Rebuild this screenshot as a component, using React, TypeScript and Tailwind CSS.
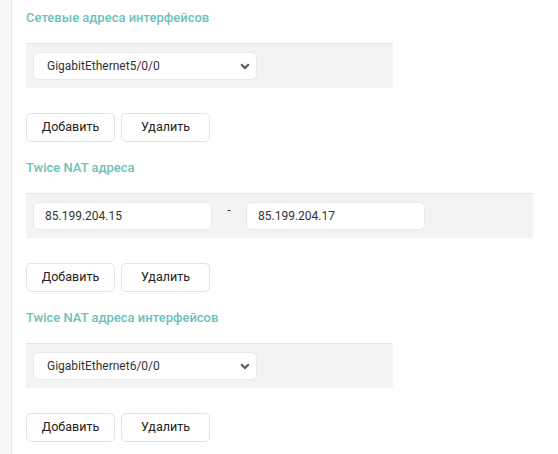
import React from 'react';

const font = { fontFamily: 'Roboto, "Noto Sans", sans-serif' };

const Chevron = () => (
  <svg width="10" height="7" viewBox="0 0 10 7" className="pointer-events-none absolute right-[7px] top-[11px]">
    <path d="M1.2 1.3L5 5 8.8 1.3" fill="none" stroke="#555" strokeWidth="2" />
  </svg>
);

const Select: React.FC<{ value: string }> = ({ value }) => (
  <div className="relative w-[224px]">
    <select
      defaultValue={value}
      className="h-[28px] w-full appearance-none rounded-[5px] border border-[#e8e8e8] bg-white pl-[13px] text-[12px] text-[#333] outline-none"
    >
      <option>{value}</option>
    </select>
    <Chevron />
  </div>
);

const Input: React.FC<{ value: string }> = ({ value }) => (
  <input
    defaultValue={value}
    className="h-[28px] w-[179px] rounded-[5px] border border-[#e8e8e8] bg-white pl-[11px] text-[12px] text-[#333] outline-none"
  />
);

const Buttons = () => (
  <div className="mt-[25px] flex gap-[6px]">
    <button className="h-[29px] w-[89px] rounded-[5px] border border-[#e3e3e3] bg-white text-[12.5px] text-[#222]">
      Добавить
    </button>
    <button className="h-[29px] w-[89px] rounded-[5px] border border-[#e3e3e3] bg-white text-[12.5px] text-[#222]">
      Удалить
    </button>
  </div>
);

const Section: React.FC<{ title: string; wide?: boolean; children: React.ReactNode }> = ({ title, wide, children }) => (
  <section className="h-[150px]">
    <h3 className="h-[43px] pt-[9px] text-[13px] font-medium leading-[18px] text-[#6cc2b9]">{title}</h3>
    <div
      className={`flex h-[45px] items-center border-t border-[#e6e6e6] bg-[#f3f3f3] pl-[7px] ${wide ? 'w-[507px]' : 'w-[367px]'}`}
    >
      {children}
    </div>
    <Buttons />
  </section>
);

export default function App() {
  return (
    <div className="flex min-h-[454px] bg-white" style={font}>
      <div className="w-[12px] shrink-0 border-r border-[#ebebeb] bg-[#f7f8fa]" />
      <div className="pl-[14px]">
        <Section title="Сетевые адреса интерфейсов">
          <Select value="GigabitEthernet5/0/0" />
        </Section>
        <Section title="Twice NAT адреса" wide>
          <Input value="85.199.204.15" />
          <span className="w-[34px] -translate-y-[6px] text-center text-[12px] text-[#333]">-</span>
          <Input value="85.199.204.17" />
        </Section>
        <Section title="Twice NAT адреса интерфейсов">
          <Select value="GigabitEthernet6/0/0" />
        </Section>
      </div>
    </div>
  );
}
